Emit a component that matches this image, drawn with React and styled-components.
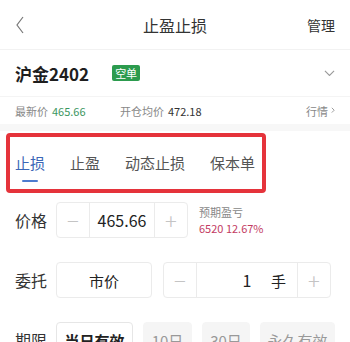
import { createGlobalStyle, styled } from 'styled-components';

const GlobalStyle = createGlobalStyle`
  html, body {
    margin: 0;
    padding: 0;
    background: #fff;
    font-family: "Noto Sans CJK SC", "Noto Sans", sans-serif;
    color: #222;
  }
`;

const Page = styled.div`
  width: 350px;
  height: 342px;
  overflow: hidden;
  background: #fff;
`;

const Header = styled.div`
  height: 50px;
  display: flex;
  align-items: center;
  justify-content: space-between;
  padding: 0 15px;
  border-bottom: 1px solid #f2f2f2;
  box-sizing: border-box;
  position: relative;
`;

const Title = styled.div`
  position: absolute;
  left: 0;
  right: 0;
  text-align: center;
  font-size: 16px;
  color: #333;
  pointer-events: none;
`;

const Manage = styled.div`
  font-size: 14px;
  color: #333;
`;

const InstrumentRow = styled.div`
  height: 47px;
  display: flex;
  align-items: center;
  padding: 0 15px;
  border-bottom: 1px solid #f4f4f4;
  box-sizing: border-box;
`;

const Name = styled.div`
  font-size: 17px;
  font-weight: 700;
  color: #1e1e1e;
`;

const Badge = styled.div`
  margin-left: 23px;
  background: #2c9b4e;
  color: #fff;
  font-size: 11px;
  line-height: 16px;
  padding: 0 3px;
  border-radius: 2px;
`;

const Spacer = styled.div`
  flex: 1;
`;

const InfoRow = styled.div`
  height: 27px;
  display: flex;
  align-items: center;
  padding: 0 15px;
  font-size: 11px;
  color: #888;
`;

const InfoItem = styled.span`
  width: ${(p) => p.$w || 'auto'};
  display: inline-flex;
  align-items: center;
  gap: ${(p) => p.$gap || '4px'};
`;

const Value = styled.span`
  color: ${(p) => p.$color || '#333'};
`;

const Band = styled.div`
  height: 7px;
  background: #f7f7f7;
`;

const TabWrap = styled.div`
  padding: 2px 0 0 6px;
`;

const TabBox = styled.div`
  width: 260px;
  height: 60px;
  box-sizing: border-box;
  border: 4px solid #e5333b;
  border-radius: 4px;
  display: flex;
  align-items: center;
  padding: 0 5px;
  gap: 25px;
`;

const Tab = styled.div`
  position: relative;
  font-size: 15px;
  color: ${(p) => (p.$active ? '#3b66b6' : '#555')};
  line-height: 20px;
  &::after {
    content: '';
    display: ${(p) => (p.$active ? 'block' : 'none')};
    position: absolute;
    left: 50%;
    bottom: -9px;
    width: 16px;
    height: 2px;
    margin-left: -8px;
    background: #4d7ccf;
    border-radius: 1px;
  }
`;

const Form = styled.div`
  padding: 9px 0 0 15px;
  display: flex;
  flex-direction: column;
  gap: 24px;
`;

const Row = styled.div`
  display: flex;
  align-items: center;
  height: 36px;
`;

const Label = styled.div`
  width: 41px;
  flex-shrink: 0;
  font-size: 16px;
  color: #333;
`;

const Stepper = styled.div`
  display: flex;
  flex-shrink: 0;
  height: 36px;
  box-sizing: border-box;
  border: 1px solid #ebebeb;
  border-radius: 4px;
  margin-left: ${(p) => p.$ml || '0'};
`;

const StepBtn = styled.div`
  width: 32px;
  display: flex;
  align-items: center;
  justify-content: center;
  color: #c4c4c4;
  font-size: 22px;
  font-weight: 300;
  border-left: ${(p) => (p.$divL ? '1px solid #ebebeb' : 'none')};
  border-right: ${(p) => (p.$divR ? '1px solid #ebebeb' : 'none')};
`;

const StepValue = styled.div`
  width: ${(p) => p.$w};
  display: flex;
  align-items: center;
  justify-content: center;
  font-size: 16px;
  color: #222;
  position: relative;
`;

const Unit = styled.span`
  position: absolute;
  right: 11px;
  font-size: 15px;
`;

const Expected = styled.div`
  margin-left: 11px;
  font-size: 11px;
  line-height: 16px;
  color: #888;
  white-space: nowrap;
`;

const Pnl = styled.div`
  color: #c33b62;
`;

const Select = styled.div`
  width: 96px;
  height: 36px;
  flex-shrink: 0;
  box-sizing: border-box;
  border: 1px solid #ebebeb;
  border-radius: 4px;
  display: flex;
  align-items: center;
  justify-content: center;
  font-size: 15px;
  color: #222;
`;

const Chip = styled.div`
  width: ${(p) => p.$w};
  flex-shrink: 0;
  height: 36px;
  box-sizing: border-box;
  margin-right: 10px;
  border-radius: 4px;
  display: flex;
  align-items: center;
  justify-content: center;
  white-space: nowrap;
  font-size: 15px;
  color: ${(p) => (p.$active ? '#222' : '#999')};
  font-weight: ${(p) => (p.$active ? 700 : 400)};
  background: ${(p) => (p.$active ? '#fff' : '#f5f5f5')};
  border: 1px solid ${(p) => (p.$active ? '#e6e6e6' : '#f5f5f5')};
`;

const Chevron = ({ dir = 'left', size = 10, color = '#666' }) => {
  const d = {
    left: 'M8 1 L2 9 L8 17',
    down: 'M1 1 L6 6 L11 1',
    right: 'M1 1 L4 4 L1 7',
  }[dir];
  const vb = { left: '0 0 10 18', down: '0 0 12 7', right: '0 0 5 8' }[dir];
  return (
    <svg width={size} viewBox={vb} fill="none" stroke={color} strokeWidth="1.2">
      <path d={d} />
    </svg>
  );
};

export default function App() {
  return (
    <Page>
      <GlobalStyle />
      <Header>
        <Chevron dir="left" size={10} color="#777" />
        <Title>止盈止损</Title>
        <Manage>管理</Manage>
      </Header>
      <InstrumentRow>
        <Name>沪金2402</Name>
        <Badge>空单</Badge>
        <Spacer />
        <Chevron dir="down" size={11} color="#999" />
      </InstrumentRow>
      <InfoRow>
        <InfoItem $w="105px">
          最新价<Value $color="#3b9660">465.66</Value>
        </InfoItem>
        <InfoItem>
          开仓均价<Value>472.18</Value>
        </InfoItem>
        <Spacer />
        <InfoItem $gap="3px">
          行情<Chevron dir="right" size={4} color="#999" />
        </InfoItem>
      </InfoRow>
      <Band />
      <TabWrap>
        <TabBox>
          <Tab $active>止损</Tab>
          <Tab>止盈</Tab>
          <Tab>动态止损</Tab>
          <Tab>保本单</Tab>
        </TabBox>
      </TabWrap>
      <Form>
        <Row>
          <Label>价格</Label>
          <Stepper>
            <StepBtn $divR>−</StepBtn>
            <StepValue $w="64px">465.66</StepValue>
            <StepBtn $divL>+</StepBtn>
          </Stepper>
          <Expected>
            预期盈亏
            <Pnl>6520 12.67%</Pnl>
          </Expected>
        </Row>
        <Row>
          <Label>委托</Label>
          <Select>市价</Select>
          <Stepper $ml="11px">
            <StepBtn $divR>−</StepBtn>
            <StepValue $w="100px">
              1<Unit>手</Unit>
            </StepValue>
            <StepBtn $divL>+</StepBtn>
          </Stepper>
        </Row>
        <Row>
          <Label>期限</Label>
          <Chip $active $w="77px">当日有效</Chip>
          <Chip $w="49px">10日</Chip>
          <Chip $w="48px">30日</Chip>
          <Chip $w="75px">永久有效</Chip>
        </Row>
      </Form>
    </Page>
  );
}
